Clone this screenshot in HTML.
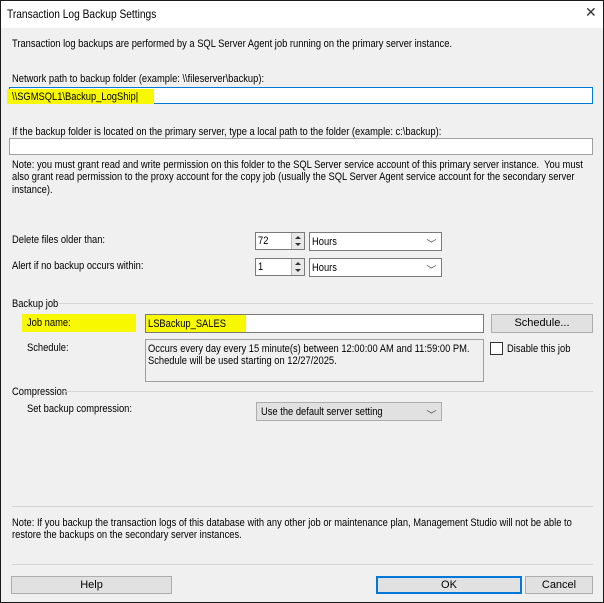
<!DOCTYPE html>
<html><head><style>
*{margin:0;padding:0;box-sizing:border-box}
body{width:604px;height:603px;overflow:hidden;background:#1a1a1a;font-family:"Liberation Sans",sans-serif;font-size:11px;color:#000}
#w{position:absolute;left:1px;top:1px;width:602px;height:601px;background:#f0f0f0;overflow:hidden}
.a{position:absolute;white-space:nowrap;line-height:12px;transform:scaleX(.85);transform-origin:0 0}
.b{position:absolute;background:#fff;border:1px solid #7a7a7a}
.btn{position:absolute;background:#e1e1e1;border:1px solid #adadad;text-align:center;line-height:16px}
.hl{position:absolute;background:#f8f800}
.ln{position:absolute;height:1px;background:#d5d5d5}
.chev{position:absolute;right:6px;top:3px;width:7px;height:7px;border-right:1px solid #555;border-bottom:1px solid #555;transform:scale(1,.6) rotate(45deg)}
.spin{position:absolute;right:0;top:0;width:13px;height:100%;background:#e8e8e8;border-left:1px solid #bbb}
.spin:before{content:"";position:absolute;left:3px;top:3px;border:3px solid transparent;border-bottom:3px solid #333;border-top:0}
.spin:after{content:"";position:absolute;left:3px;bottom:3px;border:3px solid transparent;border-top:3px solid #333;border-bottom:0}
</style></head><body><div id="w">
<div style="position:absolute;left:0;top:0;width:602px;height:27px;background:#fff"></div>
<div class="a" style="left:6px;top:7px;font-size:12px">Transaction Log Backup Settings</div>
<div class="a" style="left:584px;top:5px;font-size:14px;color:#333;transform:none;font-weight:300">✕</div>
<div class="a" style="left:11px;top:37px">Transaction log backups are performed by a SQL Server Agent job running on the primary server instance.</div>
<div class="a" style="left:11px;top:72px">Network path to backup folder (example: \\fileserver\backup):</div>
<div class="b" style="left:8px;top:86px;width:584px;height:17px;border-color:#0078d7"></div>
<div class="hl" style="left:6px;top:88px;width:147px;height:15px"></div>
<div class="a" style="left:11px;top:90px">\\SGMSQL1\Backup_LogShip|</div>
<div class="a" style="left:11px;top:125px">If the backup folder is located on the primary server, type a local path to the folder (example: c:\backup):</div>
<div class="b" style="left:8px;top:137px;width:584px;height:17px;border-color:#a0a0a0"></div>
<div class="a" style="left:11px;top:158px;line-height:12.3px">Note: you must grant read and write permission on this folder to the SQL Server service account of this primary server instance.&nbsp; You must<br>also grant read permission to the proxy account for the copy job (usually the SQL Server Agent service account for the secondary server<br>instance).</div>
<div class="a" style="left:11px;top:233px">Delete files older than:</div>
<div class="b" style="left:254px;top:231px;width:50px;height:18px"><span class="a" style="left:2px;top:2px">72</span><div class="spin"></div></div>
<div class="b" style="left:308px;top:231px;width:133px;height:19px"><span class="a" style="left:2px;top:3px">Hours</span><div class="chev"></div></div>
<div class="a" style="left:11px;top:259px">Alert if no backup occurs within:</div>
<div class="b" style="left:254px;top:257px;width:50px;height:18px"><span class="a" style="left:2px;top:2px">1</span><div class="spin"></div></div>
<div class="b" style="left:308px;top:257px;width:133px;height:19px"><span class="a" style="left:2px;top:3px">Hours</span><div class="chev"></div></div>
<div class="a" style="left:11px;top:297px">Backup job</div>
<div class="ln" style="left:58px;top:302px;width:534px"></div>
<div class="hl" style="left:21px;top:313px;width:114px;height:18px"></div>
<div class="a" style="left:26px;top:316px">Job name:</div>
<div class="b" style="left:144px;top:313px;width:339px;height:19px"></div>
<div class="hl" style="left:145px;top:314px;width:100px;height:17px"></div>
<div class="a" style="left:147px;top:317px">LSBackup_SALES</div>
<div class="btn" style="left:490px;top:313px;width:102px;height:19px">Schedule...</div>
<div class="a" style="left:26px;top:341px">Schedule:</div>
<div class="b" style="left:144px;top:338px;width:339px;height:43px;background:#f0f0f0;border-color:#a0a0a0"></div>
<div class="a" style="left:147px;top:342px;line-height:12.3px">Occurs every day every 15 minute(s) between 12:00:00 AM and 11:59:00 PM.<br>Schedule will be used starting on 12/27/2025.</div>
<div class="b" style="left:489px;top:341px;width:13px;height:13px;border-color:#333"></div>
<div class="a" style="left:506px;top:342px">Disable this job</div>
<div class="a" style="left:11px;top:385px">Compression</div>
<div class="ln" style="left:62px;top:390px;width:530px"></div>
<div class="a" style="left:26px;top:402px">Set backup compression:</div>
<div class="btn" style="left:255px;top:401px;width:186px;height:19px;text-align:left;padding-left:4px"><span class="a" style="left:4px;top:3px">Use the default server setting</span><div class="chev" style="top:4px"></div></div>
<div class="ln" style="left:11px;top:505px;width:581px"></div>
<div class="a" style="left:11px;top:517px;line-height:11.5px">Note: If you backup the transaction logs of this database with any other job or maintenance plan, Management Studio will not be able to<br>restore the backups on the secondary server instances.</div>
<div class="ln" style="left:11px;top:563px;width:581px"></div>
<div class="btn" style="left:10px;top:575px;width:161px;height:18px">Help</div>
<div class="btn" style="left:375px;top:575px;width:146px;height:18px;border:2px solid #0078d7;line-height:14px">OK</div>
<div class="btn" style="left:524px;top:575px;width:68px;height:18px">Cancel</div>
</div></body></html>
